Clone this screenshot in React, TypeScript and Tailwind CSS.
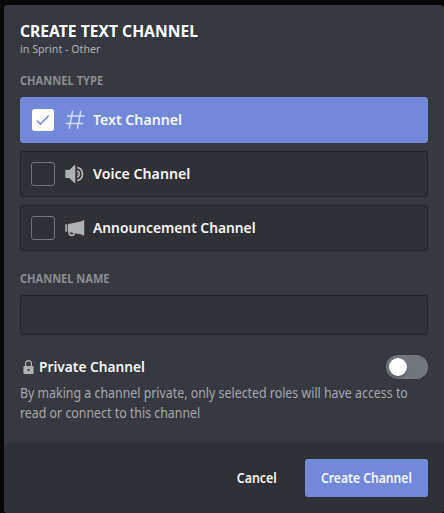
import type { ReactNode } from "react";

function HashIcon() {
  return (
    <svg width="20" height="20" viewBox="0 0 20 20" fill="none" stroke="#d3daf5" strokeWidth="1.5">
      <path d="M7.6 1 4.2 18.6M15.8 1l-3.4 17.6M2 5.9h17.6M.6 13.4h17.6" />
    </svg>
  );
}

function SpeakerIcon() {
  return (
    <svg width="20" height="20" viewBox="0 0 20 20" fill="none">
      <path d="M.3 6H4.4L9.4.9h.9v18.2h-.9L4.4 14H.3Z" fill="#b0b1b3" />
      <path d="M12.2 8.9a1.2 1.2 0 0 1 0 2.2Z" fill="#b0b1b3" />
      <path d="M12.2 6.9a3.3 3.3 0 0 1 0 6.2M12.2 3.3a6.9 6.9 0 0 1 0 13.4" stroke="#b0b1b3" strokeWidth="1.7" />
    </svg>
  );
}

function MegaphoneIcon() {
  return (
    <svg width="20" height="20" viewBox="0 0 20 20" fill="none">
      <path d="M.3 6.3h1.6v7.4H.3ZM2.8 6.3 17.6 3.1v-.9h1.6v15.4h-1.6v-.9L9.6 15.2 2.8 13.7Z" fill="#b0b1b3" />
      <path d="M4 13.4v1.5a2.8 2.8 0 0 0 5.5.3" stroke="#b0b1b3" strokeWidth="1.6" />
    </svg>
  );
}

function LockIcon() {
  return (
    <svg width="11" height="15" viewBox="0 0 11 15" fill="none">
      <path d="M2.6 7V3.6a2.9 2.9 0 0 1 5.8 0V7" stroke="#b0b1b3" strokeWidth="1.2" />
      <path fillRule="evenodd" d="M1.4 6h8.2a1 1 0 0 1 1 1v6a1 1 0 0 1-1 1H1.4a1 1 0 0 1-1-1V7a1 1 0 0 1 1-1ZM4.6 9v2h1.9V9Z" fill="#b0b1b3" />
    </svg>
  );
}

function ChannelOption({ icon, label, fit, checked = false }: { icon: ReactNode; label: string; fit: string; checked?: boolean }) {
  return (
    <div
      role="radio"
      aria-checked={checked}
      className={`flex h-[46px] items-center rounded-[3px] border pl-2.5 ${checked ? "border-[#7289da] bg-[#7289da]" : "border-[#222327] bg-[#303136]"}`}
    >
      <div className={`flex size-6 items-center justify-center rounded-[3px] border ${checked ? "border-[#7289da] bg-white bg-clip-padding" : "border-[#72757b]"}`}>
        {checked && (
          <svg width="14" height="12" viewBox="0 0 14 12" fill="none" stroke="#7289da" strokeWidth="1.5">
            <path d="m1 6.4 3.3 3.9L12.7 1.6" />
          </svg>
        )}
      </div>
      <div className="ml-2.5 mr-2 size-5">{icon}</div>
      <span className={`origin-left whitespace-nowrap pb-0.5 text-[15px] leading-5 font-semibold text-[#f6f6f7] ${fit}`}>{label}</span>
    </div>
  );
}

export default function App() {
  return (
    <div className="h-[513px] w-[444px] overflow-hidden bg-[#080808] pt-[5px] pl-1 font-['Noto_Sans',sans-serif]">
      <div className="flex h-[508px] flex-col overflow-hidden rounded-[4px] bg-[#36393f]">
        <main className="flex h-[438px] flex-col pl-4 pr-4 pt-4">
          <h1 className="h-5 w-max origin-left scale-x-[1.01] whitespace-nowrap text-[15.5px] leading-5 font-bold text-white">CREATE TEXT CHANNEL</h1>
          <p className="h-4 w-max origin-left scale-x-[0.93] whitespace-nowrap text-[11.5px] leading-4 text-[#b0b2b5]">in Sprint - Other</p>
          <h2 className="mt-4 h-4 w-max origin-left scale-x-[0.965] whitespace-nowrap text-[11.5px] leading-4 font-bold text-[#8a8c90]">CHANNEL TYPE</h2>
          <div role="radiogroup" className="mt-2 flex flex-col gap-2">
            <ChannelOption icon={<HashIcon />} label="Text Channel" fit="scale-x-[0.942]" checked />
            <ChannelOption icon={<SpeakerIcon />} label="Voice Channel" fit="scale-x-[0.945]" />
            <ChannelOption icon={<MegaphoneIcon />} label="Announcement Channel" fit="scale-x-[0.92]" />
          </div>
          <h2 className="mt-5 h-4 w-max origin-left scale-x-[0.96] whitespace-nowrap text-[11.5px] leading-4 font-bold text-[#8a8c90]">CHANNEL NAME</h2>
          <input aria-label="Channel name" className="mt-2 h-10 shrink-0 rounded-[3px] border border-[#222428] bg-[#303339] px-2.5 outline-none" />
          <div className="mt-5 flex h-6 items-center">
            <div className="ml-[3px] mr-[5px] h-[15px] w-[11px] shrink-0"><LockIcon /></div>
            <span className="origin-left scale-x-[0.915] whitespace-nowrap pb-0.5 text-[15px] leading-[22px] font-semibold text-[#f6f6f7]">Private Channel</span>
            <div role="switch" aria-checked={false} className="ml-auto flex h-6 w-[42px] items-center rounded-full bg-[#72767d] pl-[3px]">
              <div className="size-[18px] rounded-full bg-white shadow-[0_2px_3px_rgba(0,0,0,0.25)]" />
            </div>
          </div>
          <p className="mt-1 w-max origin-left scale-x-[0.916] whitespace-nowrap text-[13.5px] leading-5 text-[#a6a8ab]">
            By making a channel private, only selected roles will have access to
            <br />
            read or connect to this channel
          </p>
        </main>
        <footer className="flex h-[70px] items-start justify-end bg-[#303136] pr-4 pt-4 text-[13.5px] font-semibold">
          <button className="mr-[26px] h-[38px] whitespace-nowrap text-[#f6f6f7]"><span className="inline-block scale-x-[0.92]">Cancel</span></button>
          <button className="h-[38px] w-[123px] whitespace-nowrap rounded-[3px] bg-[#7289da] text-[#f6f6f7]"><span className="inline-block scale-x-[0.9]">Create Channel</span></button>
        </footer>
      </div>
    </div>
  );
}
